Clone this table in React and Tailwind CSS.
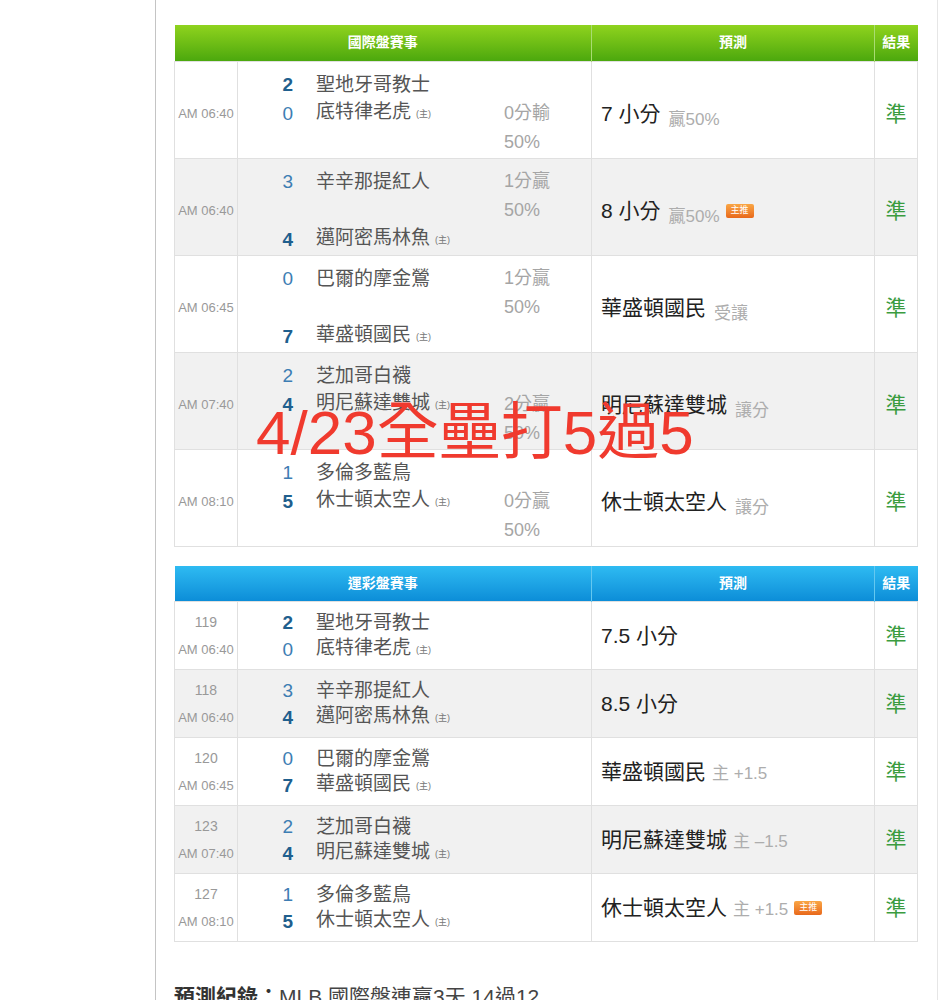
import React from "react";

const intl = [
  { time: "AM 06:40", s1: "2", t1: "聖地牙哥教士", s2: "0", t2: "底特律老虎", w: 1, type: "A", o1: "0分輸", o2: "50%", p: "7 小分", sub: "贏50%", badge: false },
  { time: "AM 06:40", s1: "3", t1: "辛辛那提紅人", s2: "4", t2: "邁阿密馬林魚", w: 2, type: "B", o1: "1分贏", o2: "50%", p: "8 小分", sub: "贏50%", badge: true },
  { time: "AM 06:45", s1: "0", t1: "巴爾的摩金鶯", s2: "7", t2: "華盛頓國民", w: 2, type: "B", o1: "1分贏", o2: "50%", p: "華盛頓國民", sub: "受讓", badge: false },
  { time: "AM 07:40", s1: "2", t1: "芝加哥白襪", s2: "4", t2: "明尼蘇達雙城", w: 2, type: "A", o1: "2分贏", o2: "50%", p: "明尼蘇達雙城", sub: "讓分", badge: false },
  { time: "AM 08:10", s1: "1", t1: "多倫多藍鳥", s2: "5", t2: "休士頓太空人", w: 2, type: "A", o1: "0分贏", o2: "50%", p: "休士頓太空人", sub: "讓分", badge: false },
];

const lottery = [
  { no: "119", time: "AM 06:40", s1: "2", t1: "聖地牙哥教士", s2: "0", t2: "底特律老虎", w: 1, p: "7.5 小分", sub: "", badge: false },
  { no: "118", time: "AM 06:40", s1: "3", t1: "辛辛那提紅人", s2: "4", t2: "邁阿密馬林魚", w: 2, p: "8.5 小分", sub: "", badge: false },
  { no: "120", time: "AM 06:45", s1: "0", t1: "巴爾的摩金鶯", s2: "7", t2: "華盛頓國民", w: 2, p: "華盛頓國民", sub: "主 +1.5", badge: false },
  { no: "123", time: "AM 07:40", s1: "2", t1: "芝加哥白襪", s2: "4", t2: "明尼蘇達雙城", w: 2, p: "明尼蘇達雙城", sub: "主 –1.5", badge: false },
  { no: "127", time: "AM 08:10", s1: "1", t1: "多倫多藍鳥", s2: "5", t2: "休士頓太空人", w: 2, p: "休士頓太空人", sub: "主 +1.5", badge: true },
];

function Badge() {
  return (
    <span className="inline-flex items-center justify-center w-[28px] h-[14px] ml-[6px] rounded-[2px] bg-gradient-to-b from-[#f9a645] to-[#e8681a] text-white text-[9px] leading-none align-middle relative -top-[3px]">
      主推
    </span>
  );
}

function Score({ v, bold }) {
  return (
    <span className={bold ? "text-[#1f5f8e] font-bold" : "text-[#3d7db3]"}>{v}</span>
  );
}

function Team({ name, home }) {
  return (
    <span className="text-[#555]">
      {name}
      {home && <span className="text-[9px] text-[#777] ml-[5px] relative -top-[1px]">(主)</span>}
    </span>
  );
}

function Header({ title, from, to, line }) {
  return (
    <thead>
      <tr className={`h-[36px] bg-gradient-to-b ${from} ${to} text-white text-[14px] font-bold`}>
        <th colSpan={2} className="font-bold">{title}</th>
        <th className={`font-bold border-l ${line}`}>預測</th>
        <th className={`font-bold border-l ${line}`}>結果</th>
      </tr>
    </thead>
  );
}

function Cols() {
  return (
    <colgroup>
      <col className="w-[63px]" />
      <col className="w-[354px]" />
      <col className="w-[283px]" />
      <col className="w-[43px]" />
    </colgroup>
  );
}

export default function App() {
  return (
    <div className="relative w-[946px] bg-white font-['Liberation_Sans','Noto_Sans_CJK_TC',sans-serif]">
      <div className="ml-[155px] w-[783px] border-l border-l-[#c4c4c4] border-r border-r-[#e6e6e6] pl-[18px] pr-[20px] pt-[25px] pb-[20px]">
        <table className="w-[743px] table-fixed border-collapse">
          <Cols />
          <Header title="國際盤賽事" from="from-[#8fd31e]" to="to-[#4ba80d]" line="border-[#a9dc72]" />
          <tbody>
            {intl.map((r, i) => (
              <tr key={i} className={`h-[97px] ${i % 2 === 1 ? "bg-[#f1f1f1]" : "bg-white"}`}>
                <td className="border border-[#e0e0e0] text-center text-[13px] text-[#999] pt-[8px] align-middle">{r.time}</td>
                <td className="border border-[#e0e0e0] pt-[8px] align-middle">
                  <div className="grid grid-cols-[55px_211px_88px] auto-rows-[29px] items-center text-[19px] leading-[29px]">
                    {r.type === "A" ? (
                      <>
                        <div className="text-right"><Score v={r.s1} bold={r.w === 1} /></div>
                        <div className="pl-[23px] whitespace-nowrap"><Team name={r.t1} /></div>
                        <div />
                        <div className="text-right"><Score v={r.s2} bold={r.w === 2} /></div>
                        <div className="pl-[23px] whitespace-nowrap"><Team name={r.t2} home /></div>
                        <div className="text-[18px] text-[#a5a5a5]">{r.o1}</div>
                        <div />
                        <div />
                        <div className="text-[18px] text-[#a5a5a5]">{r.o2}</div>
                      </>
                    ) : (
                      <>
                        <div className="text-right"><Score v={r.s1} bold={r.w === 1} /></div>
                        <div className="pl-[23px] whitespace-nowrap"><Team name={r.t1} /></div>
                        <div className="text-[18px] text-[#a5a5a5]">{r.o1}</div>
                        <div />
                        <div />
                        <div className="text-[18px] text-[#a5a5a5]">{r.o2}</div>
                        <div className="text-right"><Score v={r.s2} bold={r.w === 2} /></div>
                        <div className="pl-[23px] whitespace-nowrap"><Team name={r.t2} home /></div>
                        <div />
                      </>
                    )}
                  </div>
                </td>
                <td className="border border-[#e0e0e0] pl-[9px] pt-[8px] align-middle whitespace-nowrap">
                  <span className="text-[21px] text-[#222]">{r.p}</span>
                  <span className="text-[17px] text-[#adadad] ml-[8px] relative top-[4px]">{r.sub}</span>
                  {r.badge && <Badge />}
                </td>
                <td className="border border-[#e0e0e0] text-center text-[21px] text-[#3b9c3f] pt-[8px] align-middle">準</td>
              </tr>
            ))}
          </tbody>
        </table>

        <table className="mt-[19px] w-[743px] table-fixed border-collapse">
          <Cols />
          <Header title="運彩盤賽事" from="from-[#2ebbf2]" to="to-[#0a8cd7]" line="border-[#64c8f0]" />
          <tbody>
            {lottery.map((r, i) => (
              <tr key={i} className={`h-[68px] ${i % 2 === 1 ? "bg-[#f1f1f1]" : "bg-white"}`}>
                <td className="border border-[#e0e0e0] text-center align-middle">
                  <div className="text-[14px] leading-[27px] text-[#999]">{r.no}</div>
                  <div className="text-[13px] leading-[27px] text-[#999]">{r.time}</div>
                </td>
                <td className="border border-[#e0e0e0] align-middle">
                  <div className="grid grid-cols-[55px_211px_88px] auto-rows-[27px] items-center text-[19px] leading-[27px]">
                    <div className="text-right"><Score v={r.s1} bold={r.w === 1} /></div>
                    <div className="pl-[23px] whitespace-nowrap"><Team name={r.t1} /></div>
                    <div />
                    <div className="text-right"><Score v={r.s2} bold={r.w === 2} /></div>
                    <div className="pl-[23px] whitespace-nowrap"><Team name={r.t2} home /></div>
                    <div />
                  </div>
                </td>
                <td className="border border-[#e0e0e0] pl-[9px] align-middle whitespace-nowrap">
                  <span className="text-[21px] text-[#222]">{r.p}</span>
                  {r.sub && <span className="text-[17px] text-[#adadad] ml-[6px]">{r.sub}</span>}
                  {r.badge && <Badge />}
                </td>
                <td className="border border-[#e0e0e0] text-center text-[21px] text-[#3b9c3f] align-middle">準</td>
              </tr>
            ))}
          </tbody>
        </table>

        <div className="mt-[40px] text-[21px] leading-[30px] text-[#444] whitespace-nowrap">
          <span className="font-bold text-[#333]">預測紀錄：</span>
          <span>MLB 國際盤連贏3天 14過12</span>
        </div>
      </div>

      <div className="absolute left-[256px] top-[402px] text-[62px] leading-[62px] text-[#f03a2e] whitespace-nowrap">
        4/23全壘打5過5
      </div>
    </div>
  );
}
